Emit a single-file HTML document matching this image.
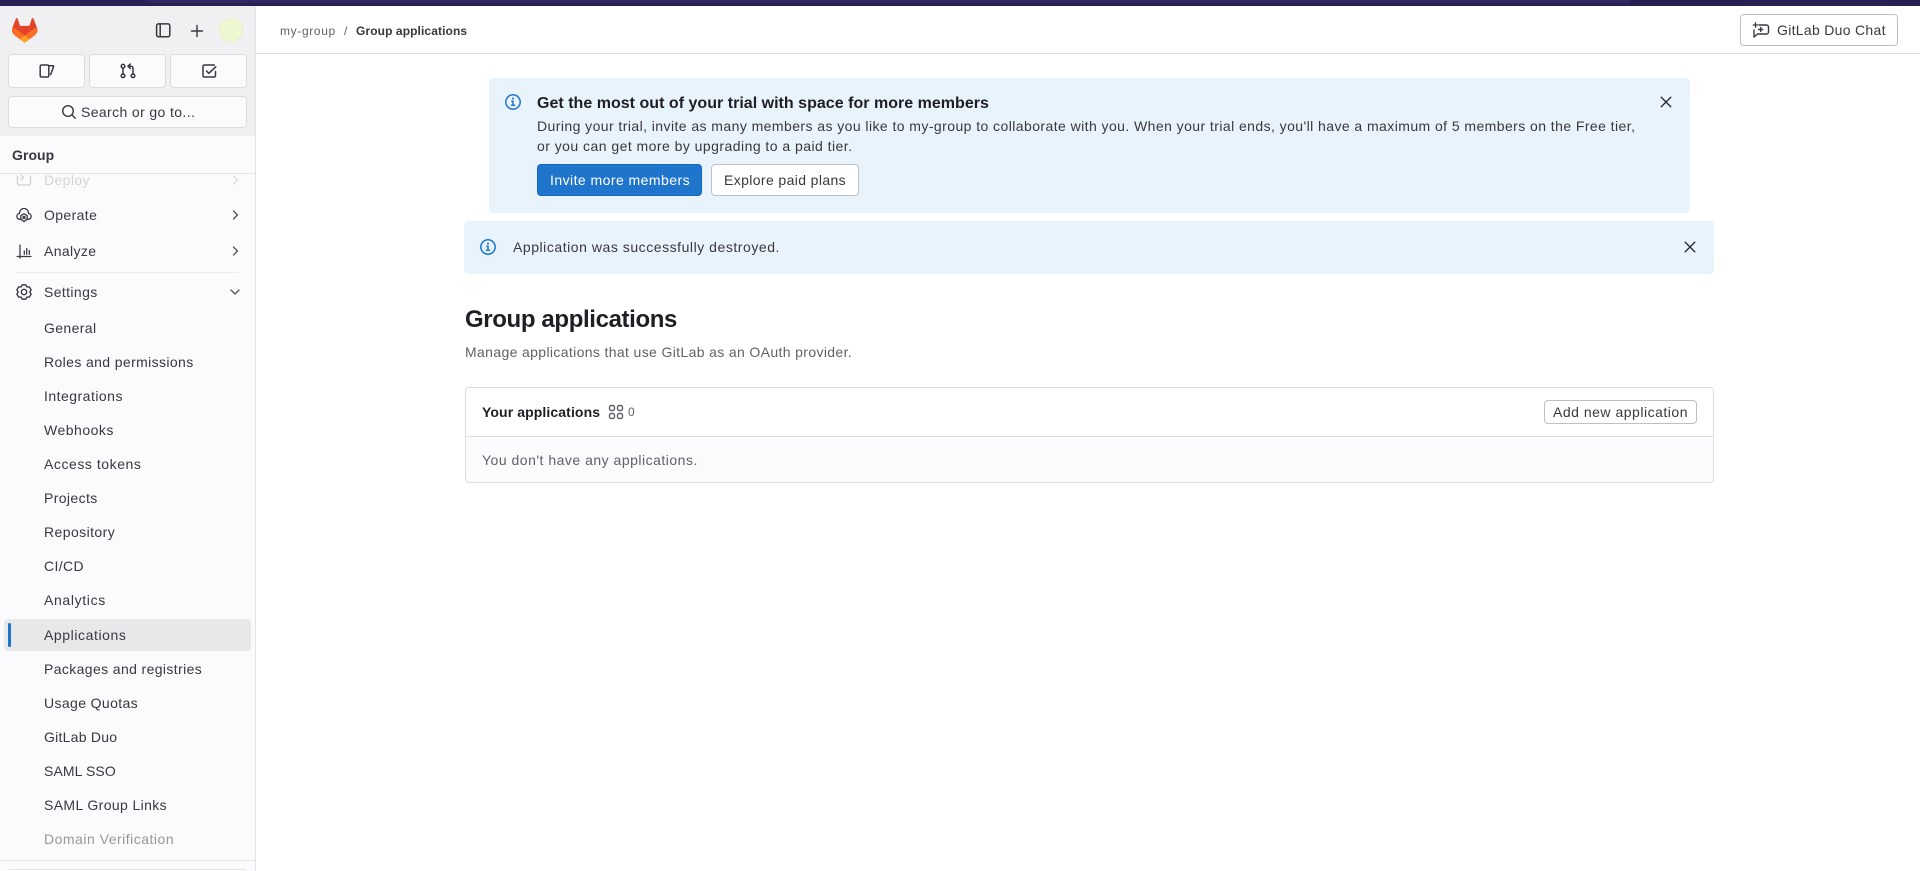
<!DOCTYPE html>
<html lang="en">
<head>
<meta charset="utf-8">
<title>Group applications</title>
<style>
html,body{margin:0;padding:0;width:1920px;height:871px;overflow:hidden;background:#fff}
body{font-family:"Liberation Sans",sans-serif;font-size:14px;color:#3a383f;position:relative}
.a{position:absolute}
.t{position:absolute;white-space:nowrap;line-height:20px;letter-spacing:.38px;-webkit-font-smoothing:antialiased}
.b{font-weight:700}
.box{position:absolute;box-sizing:border-box;background:#fff;border:1px solid #bfbfc3;border-radius:4px}
svg{position:absolute;display:block;fill:none;stroke:#3a383f;stroke-width:1.4;stroke-linecap:round;stroke-linejoin:round}
.chev{stroke:#535158;stroke-width:1.25}
</style>
</head>
<body>
<!-- top bar -->
<div class="a" style="left:0;top:0;width:1920px;height:6px;background:#2a1f52"></div>
<div class="a" style="left:145px;top:0;width:1485px;height:3px;background:#322660"></div>

<!-- sidebar -->
<div class="a" style="left:0;top:6px;width:255px;height:130px;background:#f0f0f2"></div>
<div class="a" style="left:0;top:136px;width:255px;height:735px;background:#fbfafd"></div>
<div class="a" style="left:255px;top:6px;width:1px;height:865px;background:#e4e4e6"></div>

<svg style="left:12px;top:18px;stroke:none" width="25.5" height="24.5" viewBox="0 0 25 24">
<path d="m24.507 9.5-.034-.09L21.082.562a.896.896 0 0 0-1.694.091l-2.29 7.01H7.825L5.535.653a.898.898 0 0 0-1.694-.09L.451 9.411.416 9.5a6.297 6.297 0 0 0 2.09 7.278l.012.01.03.022 5.16 3.867 2.56 1.935 1.554 1.176a1.051 1.051 0 0 0 1.268 0l1.555-1.176 2.56-1.935 5.197-3.89.014-.01A6.297 6.297 0 0 0 24.507 9.5Z" fill="#E24329"/>
<path d="m24.507 9.5-.034-.09a11.44 11.44 0 0 0-4.56 2.051l-7.447 5.632 4.742 3.584 5.197-3.89.014-.01A6.297 6.297 0 0 0 24.507 9.5Z" fill="#FC6D26"/>
<path d="m7.707 20.677 2.56 1.935 1.555 1.176a1.051 1.051 0 0 0 1.268 0l1.555-1.176 2.56-1.935-4.743-3.584-4.755 3.584Z" fill="#FCA326"/>
<path d="M5.01 11.461a11.43 11.43 0 0 0-4.56-2.05L.416 9.5a6.297 6.297 0 0 0 2.09 7.278l.012.01.03.022 5.16 3.867 4.745-3.584-7.444-5.632Z" fill="#FC6D26"/>
</svg>

<!-- panel toggle -->
<svg style="left:155px;top:22px;stroke-width:1.5" width="16" height="16" viewBox="0 0 16 16"><rect x="1.6" y="1.9" width="13.2" height="12.8" rx="1.8"/><path d="M5.2 1.9v12.8"/></svg>
<!-- plus -->
<svg style="left:189px;top:22.5px" width="16" height="16" viewBox="0 0 16 16"><path d="M8 2.5v11M2.5 8h11"/></svg>
<!-- avatar -->
<div class="a" style="left:219px;top:18px;width:24px;height:24px;border-radius:50%;background:#eef8d0;box-shadow:inset 0 0 0 1px #e6efc8"></div>

<!-- top buttons -->
<div class="box" style="left:8px;top:54px;width:77px;height:34px;background:#fbfafd;border-color:#dcdcde"></div>
<div class="box" style="left:89px;top:54px;width:77px;height:34px;background:#fbfafd;border-color:#dcdcde"></div>
<div class="box" style="left:170px;top:54px;width:77px;height:34px;background:#fbfafd;border-color:#dcdcde"></div>
<svg style="left:39px;top:63px;stroke-width:1.5" width="16" height="16" viewBox="0 0 16 16"><path d="M1.2 3.3A1.3 1.3 0 0 1 2.5 2h6a1.300 1.300 0 0 1 1.300 1.300v9.400A1.300 1.300 0 0 1 8.500 14h-6a1.300 1.300 0 0 1-1.300-1.300z"/><path d="M9.800 2.800h4.200a.6.6 0 0 1 .6.8l-3 8"/></svg>
<svg style="left:120px;top:63px;stroke-width:1.5" width="16" height="16" viewBox="0 0 16 16"><circle cx="3" cy="3.200" r="1.800"/><circle cx="3" cy="12.800" r="1.800"/><circle cx="13" cy="12.800" r="1.800"/><path d="M3 5v6M13 11V5.200a2 2 0 0 0-2-2H8.500M10.300 1 8 3.200l2.300 2.200"/></svg>
<svg style="left:201px;top:63px;stroke-width:1.5" width="16" height="16" viewBox="0 0 16 16"><path d="M14.500 8.500v4.200a1.300 1.300 0 0 1-1.300 1.300H3.300A1.300 1.300 0 0 1 2 12.700V3.300A1.300 1.300 0 0 1 3.300 2h10"/><path d="M5.500 8 7.800 10.300 14.800 3.800"/></svg>

<!-- search -->
<div class="box" style="left:8px;top:96px;width:239px;height:32px;background:#fbfafd;border-color:#dcdcde"></div>
<svg style="left:61px;top:104px" width="16" height="16" viewBox="0 0 16 16"><circle cx="7" cy="7" r="5.300"/><path d="m10.900 10.900 3.400 3.400"/></svg>
<div class="t" style="left:81px;top:102px">Search or go to...</div>

<!-- nav: deploy (clipped under header) -->
<div class="t" style="left:44px;top:170px;color:#d4d4d7">Deploy</div>
<svg style="left:16px;top:172px;stroke:#d4d4d6" width="16" height="16" viewBox="0 0 16 16"><path d="M1.500 4v7.500A1.500 1.500 0 0 0 3 13h10a1.500 1.500 0 0 0 1.500-1.500V4M5 3l2.500 2.500L5 8"/></svg>
<svg style="left:232px;top:172px;stroke:#d8d8da;stroke-width:1.2" width="8" height="16" viewBox="0 0 8 16"><path d="m1.500 4 4 4-4 4"/></svg>

<!-- group header -->
<div class="a" style="left:0;top:136px;width:255px;height:37px;background:#fbfafd"></div>
<div class="t b" style="left:12px;top:145px;letter-spacing:.05px">Group</div>
<div class="a" style="left:0;top:173px;width:255px;height:1px;background:#e4e4e6"></div>

<svg style="left:16px;top:207px;stroke-width:1.35" width="16" height="16" viewBox="0 0 16 16"><path d="M4 12.300H3.600C2 12.300.9 11 .9 9.300C.9 7.800 2 6.700 3.300 6.500C3.700 3.500 5.500 1.500 8 1.500C10.500 1.500 12.300 3.500 12.700 6.500C14 6.700 15.100 7.800 15.100 9.300C15.100 11 14 12.300 12.400 12.300H12"/><path d="M8 6.800l3.200 1.900v3.700L8 14.400l-3.200-2V8.700z"/><circle cx="8" cy="10.600" r="1"/></svg>
<div class="t" style="left:44px;top:205px">Operate</div>
<svg class="chev" style="left:232px;top:207px" width="8" height="16" viewBox="0 0 8 16"><path d="m1.500 4 4 4-4 4"/></svg>

<svg style="left:16px;top:243px;stroke-width:1.25" width="16" height="16" viewBox="0 0 16 16"><path d="M4 2v13M1.200 13.500H15M8.300 8v3.200M10.700 5.500v5.700M13.300 7.500v3.700"/></svg>
<div class="t" style="left:44px;top:241px">Analyze</div>
<svg class="chev" style="left:232px;top:243px" width="8" height="16" viewBox="0 0 8 16"><path d="m1.500 4 4 4-4 4"/></svg>

<div class="a" style="left:16px;top:272px;width:223px;height:1px;background:#ececef"></div>

<svg style="left:16px;top:284px;stroke-width:1.4" width="16" height="16" viewBox="0 0 16 16"><path d="M9.660.79 10.950 2.890 13.410 2.950 15.080 5.840 13.900 8 15.080 10.160 13.410 13.050 10.950 13.110 9.660 15.210H6.340L5.050 13.110 2.590 13.050.92 10.160 2.100 8 .92 5.840 2.590 2.950 5.050 2.890 6.340.79Z"/><circle cx="8" cy="8" r="2.700"/></svg>
<div class="t" style="left:44px;top:282px">Settings</div>
<svg class="chev" style="left:227px;top:284px" width="16" height="16" viewBox="0 0 16 16"><path d="m4 6 4 4 4-4"/></svg>

<div class="t" style="left:44px;top:318px">General</div>
<div class="t" style="left:44px;top:352px">Roles and permissions</div>
<div class="t" style="left:44px;top:386px;letter-spacing:.48px">Integrations</div>
<div class="t" style="left:44px;top:420px;letter-spacing:.5px">Webhooks</div>
<div class="t" style="left:44px;top:454px;letter-spacing:.55px">Access tokens</div>
<div class="t" style="left:44px;top:488px">Projects</div>
<div class="t" style="left:44px;top:522px;letter-spacing:.42px">Repository</div>
<div class="t" style="left:44px;top:556px">CI/CD</div>
<div class="t" style="left:44px;top:590px;letter-spacing:.65px">Analytics</div>
<div class="a" style="left:4px;top:619px;width:247px;height:32px;background:#e8e8ea;border-radius:4px"></div>
<div class="a" style="left:8px;top:623px;width:3px;height:24px;background:#1f75cb;border-radius:2px"></div>
<div class="t" style="left:44px;top:625px;letter-spacing:.58px">Applications</div>
<div class="t" style="left:44px;top:659px">Packages and registries</div>
<div class="t" style="left:44px;top:693px">Usage Quotas</div>
<div class="t" style="left:44px;top:727px;letter-spacing:.25px">GitLab Duo</div>
<div class="t" style="left:44px;top:761px;letter-spacing:.1px">SAML SSO</div>
<div class="t" style="left:44px;top:795px">SAML Group Links</div>
<div class="t" style="left:44px;top:829px;color:#97979b;letter-spacing:.5px">Domain Verification</div>
<div class="a" style="left:0;top:860px;width:255px;height:1px;background:#e4e4e6"></div>
<div class="a" style="left:8px;top:869px;width:239px;height:2px;background:#fff;border-top:1px solid #e4e4e6;border-radius:4px 4px 0 0;box-sizing:border-box"></div>

<!-- breadcrumb header -->
<div class="a" style="left:256px;top:53px;width:1664px;height:1px;background:#dcdcde"></div>
<div class="t" style="left:280px;top:20.5px;font-size:12px;color:#626168;letter-spacing:.65px">my-group</div>
<div class="t" style="left:344px;top:20.5px;font-size:12px;color:#626168">/</div>
<div class="t b" style="left:356px;top:20.5px;font-size:12px;letter-spacing:.1px">Group applications</div>

<!-- Duo -->
<div class="box" style="left:1740px;top:14px;width:158px;height:32px"></div>
<svg style="left:1752px;top:22px;stroke-width:1.4" width="18" height="17" viewBox="0 0 18 17"><path d="M7 3h7.500A2 2 0 0 1 16.500 5v5a2 2 0 0 1-2 2H5.500L2 15V8"/><path d="M8.700 5.500v4M6.700 7.500h4"/><path d="M3.500.8v4.400M1.300 3h4.400" stroke-width="1.300"/></svg>
<div class="t" style="left:1777px;top:20px;letter-spacing:.3px">GitLab Duo Chat</div>

<!-- alert 1 -->
<div class="a" style="left:489px;top:78px;width:1201px;height:135px;background:#e9f3fc;border-radius:4px"></div>
<svg style="left:505px;top:94px;stroke:#1f75cb;stroke-width:1.5" width="16" height="16" viewBox="0 0 16 16"><circle cx="8" cy="8" r="7.200"/><path d="M6.800 7.300H8v4M6.500 11.300h3"/><path d="M8 4.500v.3" stroke-width="1.900"/></svg>
<div class="t b" style="left:537px;top:94px;font-size:16px;color:#1f1e24;letter-spacing:.02px">Get the most out of your trial with space for more members</div>
<div class="t" style="left:537px;top:116px;letter-spacing:.43px">During your trial, invite as many members as you like to my-group to collaborate with you. When your trial ends, you'll have a maximum of 5 members on the Free tier,</div>
<div class="t" style="left:537px;top:136px;letter-spacing:.46px">or you can get more by upgrading to a paid tier.</div>
<div class="a" style="left:537px;top:164px;width:165px;height:32px;background:#1f75cb;border:1px solid #1068bf;box-sizing:border-box;border-radius:4px"></div>
<div class="t" style="left:550px;top:170px;color:#fff;letter-spacing:.45px">Invite more members</div>
<div class="box" style="left:711px;top:164px;width:148px;height:32px"></div>
<div class="t" style="left:724px;top:170px">Explore paid plans</div>
<svg style="left:1658px;top:94px;stroke:#1f1e24;stroke-width:1.35" width="16" height="16" viewBox="0 0 16 16"><path d="m3.200 3.200 9.600 9.600M12.800 3.200 3.200 12.800"/></svg>

<!-- alert 2 -->
<div class="a" style="left:464px;top:221px;width:1250px;height:53px;background:#e9f3fc;border-radius:4px"></div>
<svg style="left:480px;top:239px;stroke:#1f75cb;stroke-width:1.5" width="16" height="16" viewBox="0 0 16 16"><circle cx="8" cy="8" r="7.200"/><path d="M6.800 7.300H8v4M6.500 11.300h3"/><path d="M8 4.500v.3" stroke-width="1.900"/></svg>
<div class="t" style="left:513px;top:237px;letter-spacing:.54px">Application was successfully destroyed.</div>
<svg style="left:1682px;top:239px;stroke:#1f1e24;stroke-width:1.35" width="16" height="16" viewBox="0 0 16 16"><path d="m3.200 3.200 9.600 9.600M12.800 3.200 3.200 12.800"/></svg>

<!-- heading -->
<div class="t b" style="left:465px;top:303.500px;font-size:24px;line-height:32px;color:#1f1e24;letter-spacing:-.37px">Group applications</div>
<div class="t" style="left:465px;top:342px;color:#626168;letter-spacing:.36px">Manage applications that use GitLab as an OAuth provider.</div>

<!-- card -->
<div class="a" style="left:465px;top:387px;width:1249px;height:96px;box-sizing:border-box;border:1px solid #dcdcde;border-radius:4px;background:#fbfafd;overflow:hidden">
  <div class="a" style="left:0;top:0;width:1247px;height:48px;background:#fff;border-bottom:1px solid #dcdcde"></div>
</div>
<div class="t b" style="left:482px;top:402px;color:#1f1e24;letter-spacing:.1px">Your applications</div>
<svg style="left:608px;top:404px;stroke:#626168" width="16" height="16" viewBox="0 0 16 16"><rect x="1.500" y="1.500" width="5" height="5" rx="1.800"/><rect x="9.500" y="1.500" width="5" height="5" rx="1.800"/><rect x="1.500" y="9.500" width="5" height="5" rx="1.800"/><rect x="9.500" y="9.500" width="5" height="5" rx="1.800"/></svg>
<div class="t" style="left:628px;top:402px;font-size:12px;color:#626168">0</div>
<div class="box" style="left:1544px;top:400px;width:153px;height:24px"></div>
<div class="t" style="left:1553px;top:402px;letter-spacing:.51px">Add new application</div>
<div class="t" style="left:482px;top:449.500px;color:#626168;letter-spacing:.5px">You don't have any applications.</div>
</body>
</html>
